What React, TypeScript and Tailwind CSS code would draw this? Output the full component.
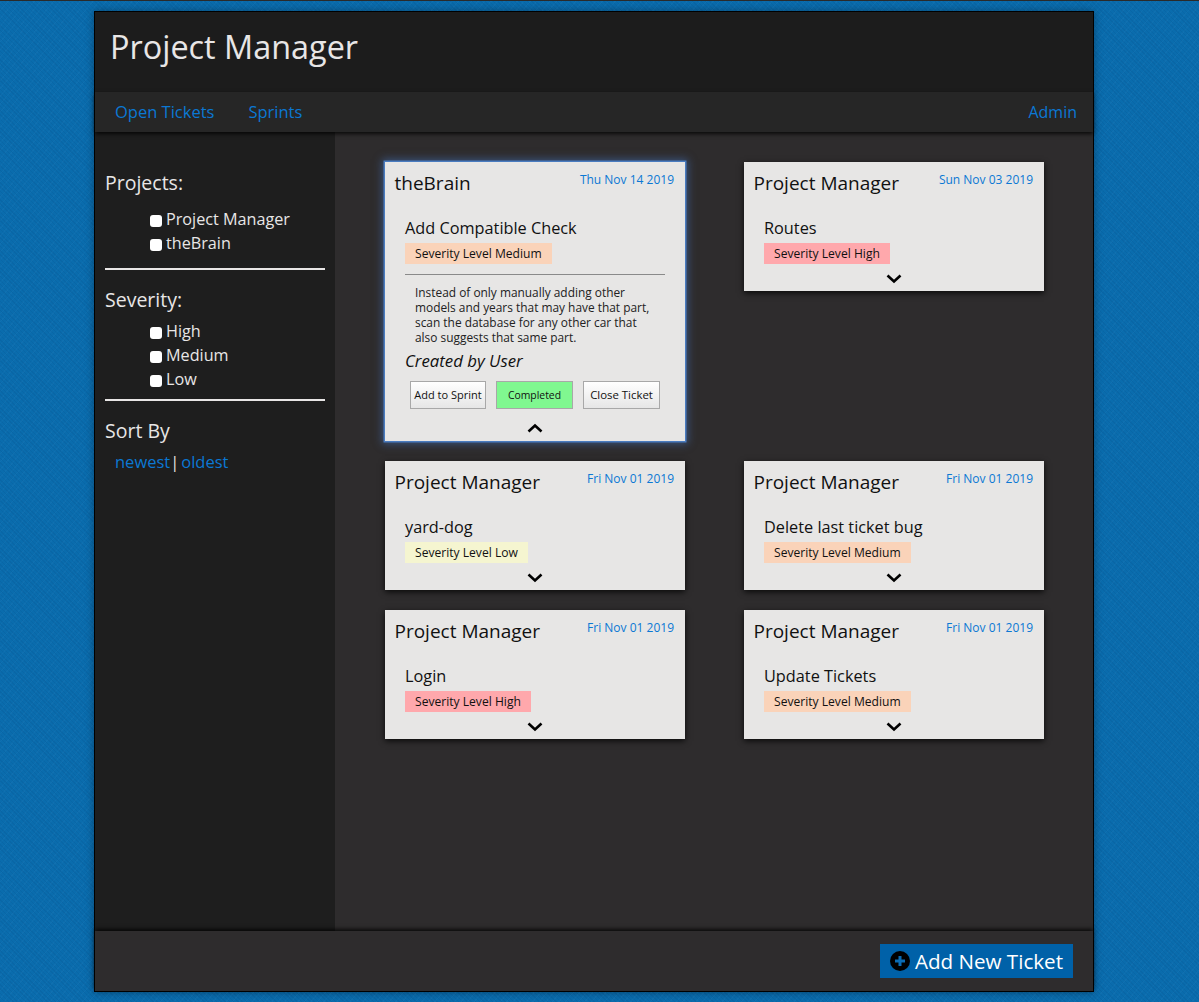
const tickets = [
  { project: "theBrain", date: "Thu Nov 14 2019", title: "Add Compatible Check", level: "Medium", open: true },
  { project: "Project Manager", date: "Sun Nov 03 2019", title: "Routes", level: "High" },
  { project: "Project Manager", date: "Fri Nov 01 2019", title: "yard-dog", level: "Low" },
  { project: "Project Manager", date: "Fri Nov 01 2019", title: "Delete last ticket bug", level: "Medium" },
  { project: "Project Manager", date: "Fri Nov 01 2019", title: "Login", level: "High" },
  { project: "Project Manager", date: "Fri Nov 01 2019", title: "Update Tickets", level: "Medium" },
];

const levelColors: Record<string, string> = {
  High: "bg-[#ffa8ac]",
  Medium: "bg-[#fad3b9]",
  Low: "bg-[#f5f5d0]",
};

function Chevron({ up }: { up?: boolean }) {
  return (
    <svg width="16" height="10" viewBox="0 0 16 10" fill="none" stroke="#000" strokeWidth="2.6">
      <path d={up ? "M1.5 8.5 L8 2.5 L14.5 8.5" : "M1.5 1.5 L8 7.5 L14.5 1.5"} />
    </svg>
  );
}

function Check({ label }: { label: string }) {
  return (
    <label className="flex items-center h-6 text-[16.2px] text-[#e8e6e6]">
      <span className="w-3 h-3 mt-[3px] mr-1 rounded-[3px] bg-white" />
      {label}
    </label>
  );
}

function Ticket({ t }: { t: (typeof tickets)[number] }) {
  return (
    <article
      className={`w-[300px] self-start bg-[#e7e6e5] text-[#111] ${
        t.open
          ? "h-[279px] shadow-[0_0_0_1.5px_#4a7cc0,0_0_8px_3px_rgba(70,120,200,0.5)]"
          : "h-[129px] shadow-[0_2px_6px_rgba(0,0,0,0.8)]"
      }`}
    >
      <div className="flex justify-between pl-[9.5px] pr-[11px] pt-[8px] h-[56px]">
        <span className="text-[19px] leading-[26px]">{t.project}</span>
        <span className="text-[12px] leading-[19px] text-[#0b78d4]">{t.date}</span>
      </div>
      <div className="pl-5 text-[16.3px] leading-[20px]">{t.title}</div>
      <div className={`ml-5 mt-[5px] w-fit h-[21px] px-[10px] text-[12.1px] leading-[21px] ${levelColors[t.level]}`}>
        Severity Level {t.level}
      </div>
      {t.open && (
        <>
          <div className="mx-5 mt-[10px] border-t border-[#8a8a8a]" />
          <p className="pl-[30px] pr-6 mt-[10px] text-[11.9px] leading-[15px] text-[#222]">
            Instead of only manually adding other models and years that may have that part, scan the database for any
            other car that also suggests that same part.
          </p>
          <div className="pl-5 mt-[6px] text-[16.8px] leading-[20px] italic">Created by User</div>
          <div className="flex justify-between px-[25px] mt-[10px]">
            <button className="w-[76px] h-[28px] text-[11px] border border-[#a8a8a8] bg-gradient-to-b from-white to-[#e6e6e6]">
              Add to Sprint
            </button>
            <button className="w-[77px] h-[28px] pt-px text-[10.4px] border border-[#a8a8a8] bg-[#80f890]">Completed</button>
            <button className="w-[77px] h-[28px] text-[11.4px] border border-[#a8a8a8] bg-gradient-to-b from-white to-[#e6e6e6]">
              Close Ticket
            </button>
          </div>
        </>
      )}
      <div className={`flex justify-center ${t.open ? "mt-[14px]" : "mt-[10px]"}`}>
        <Chevron up={t.open} />
      </div>
    </article>
  );
}

export default function App() {
  return (
    <div className="min-h-[1002px] pt-[10px] border-t border-[#2a2a2a] bg-[#0a6cad] bg-[repeating-linear-gradient(45deg,rgba(0,40,90,0.08)_0px,rgba(0,40,90,0.08)_1px,transparent_1px,transparent_3px),repeating-linear-gradient(-50deg,rgba(120,190,240,0.05)_0px,rgba(120,190,240,0.05)_1px,transparent_1px,transparent_5px)] font-['Open_Sans','Liberation_Sans',sans-serif]">
      <div className="w-[1000px] h-[981px] ml-[94px] flex flex-col border border-black bg-[#2e2c2d] shadow-[0_0_8px_rgba(0,0,0,0.35)]">
        <header className="h-[80px] pl-[15px] pt-[11px] bg-[#1c1c1c]">
          <h1 className="text-[32.4px] leading-[46px] text-[#e8e6e6]">Project Manager</h1>
        </header>
        <nav className="h-[40px] flex items-center gap-[34px] px-5 bg-[#262626] text-[16.5px] text-[#0b78d4] shadow-[0_2px_4px_rgba(0,0,0,0.8)] relative">
          <a>Open Tickets</a>
          <a>Sprints</a>
          <a className="ml-auto -mr-[4px] text-[16px]">Admin</a>
        </nav>
        <div className="flex flex-1">
          <aside className="w-[240px] px-[10px] pt-[38px] bg-[#1e1e1e] text-[#e8e6e6]">
            <h2 className="text-[19.5px] leading-[26px]">Projects:</h2>
            <div className="pl-[45px] mt-[11px]">
              <Check label="Project Manager" />
              <Check label="theBrain" />
            </div>
            <hr className="mt-[13px] border-t-2 border-[#e8e6e6]" />
            <h2 className="mt-[17px] text-[19.5px] leading-[26px]">Severity:</h2>
            <div className="pl-[45px] mt-[6px]">
              <Check label="High" />
              <Check label="Medium" />
              <Check label="Low" />
            </div>
            <hr className="mt-2 border-t-2 border-[#e8e6e6]" />
            <h2 className="mt-[17px] text-[19.5px] leading-[26px]">Sort By</h2>
            <div className="flex pl-[10px] mt-[6px] text-[16.5px] leading-[24px]">
              <a className="text-[#0b78d4]">newest</a>
              <span>|</span>
              <a className="ml-[2px] text-[#0b78d4]">oldest</a>
            </div>
          </aside>
          <main className="flex-1 pl-[50px] pt-[30px]">
            <div className="grid grid-cols-[300px_300px] gap-x-[59px] gap-y-5">
              {tickets.map((t, i) => (
                <Ticket key={i} t={t} />
              ))}
            </div>
          </main>
        </div>
        <footer className="h-[60px] flex items-center justify-end pr-5 bg-[#2e2c2d] shadow-[0_-2px_4px_rgba(0,0,0,0.8)] relative">
          <button className="flex items-center gap-[5px] h-[34px] px-[10px] bg-[#0061a8] text-[20.6px] text-white">
            <svg width="20" height="20" viewBox="0 0 20 20">
              <circle cx="10" cy="10" r="10" fill="#000" />
              <path d="M10 5 V15 M5 10 H15" stroke="#0a6cb5" strokeWidth="3" />
            </svg>
            Add New Ticket
          </button>
        </footer>
      </div>
    </div>
  );
}
